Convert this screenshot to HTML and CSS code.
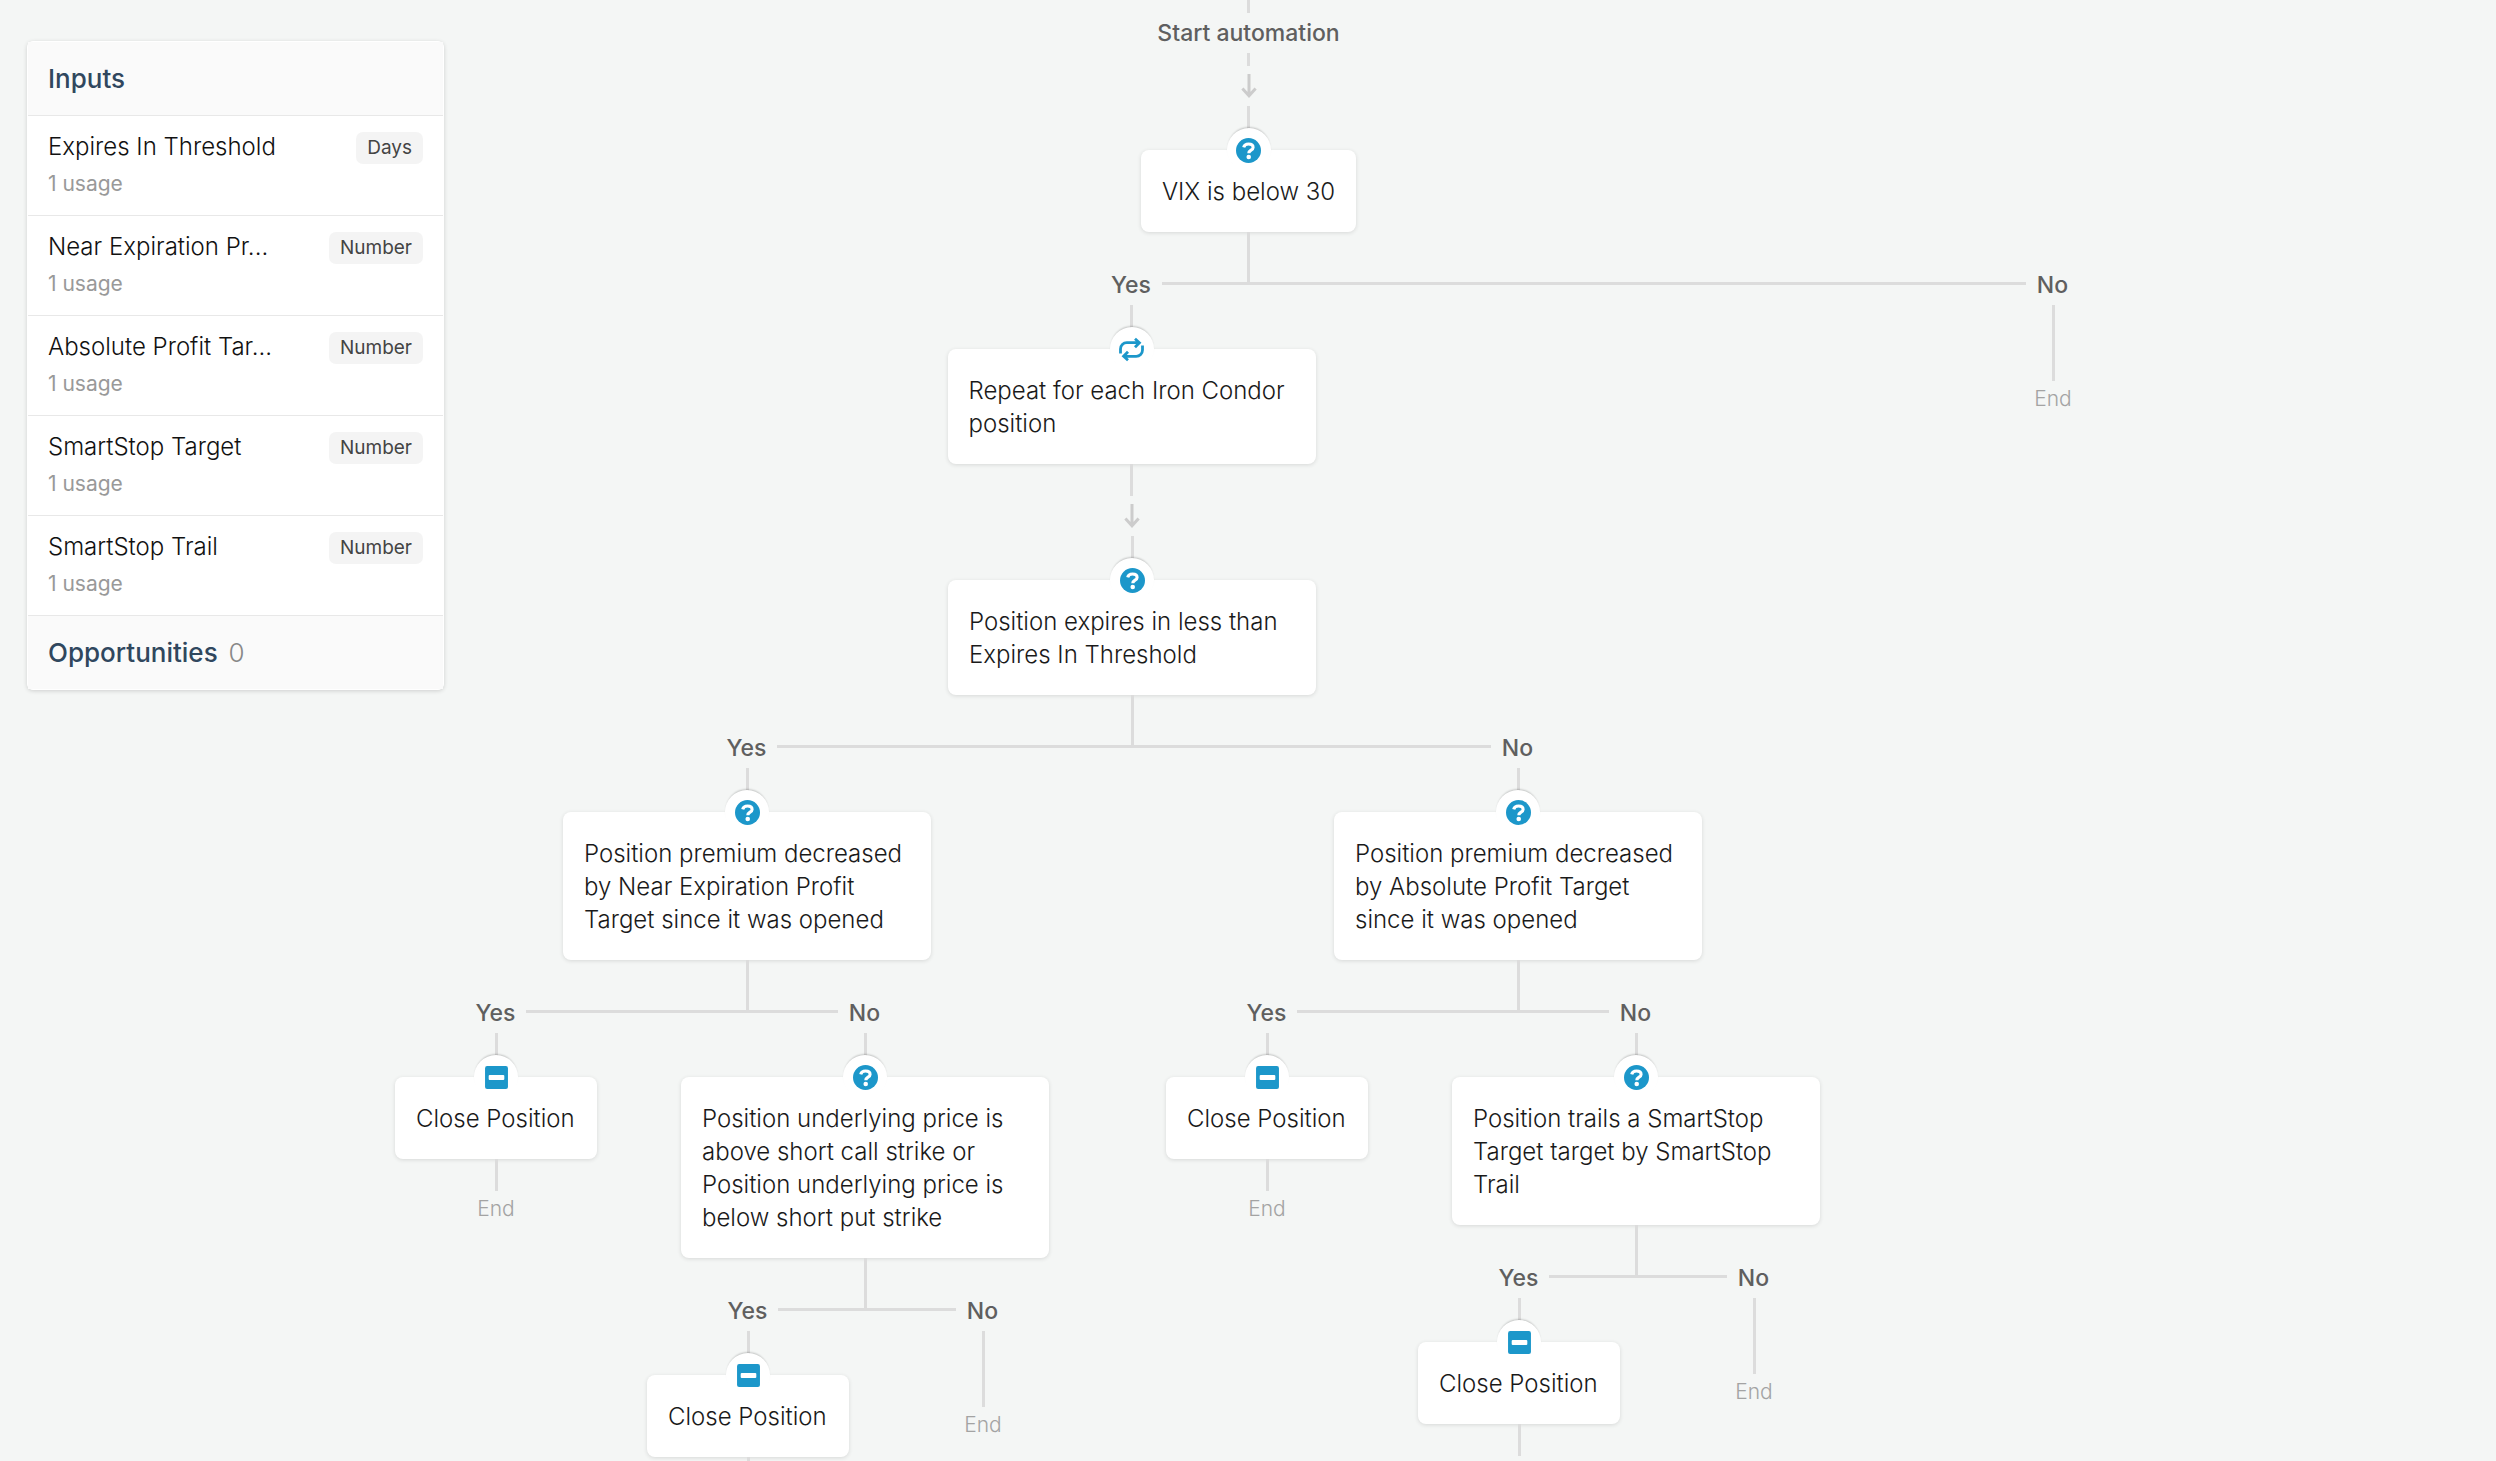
FILE: index.html
```html
<!DOCTYPE html>
<html lang="en">
<head>
    <meta charset="UTF-8">
    <meta name="viewport" content="width=device-width, initial-scale=1.0">
    <title>Automation Editor</title>
    <link rel="stylesheet" href="styles.css">
</head>
<body>
    <!-- Shared icons -->
    <svg class="icon-defs" aria-hidden="true">
        <symbol id="icon-question" viewBox="0 0 24 24">
            <circle cx="12" cy="12" r="12" fill="#1c97ca"/>
            <path d="M7.4 8.9C7.9 6.8 9.7 5.7 12 5.7c2.5 0 4.4 1.2 4.4 3.3 0 2.8-4.1 2.5-4.1 5.6" fill="none" stroke="#fff" stroke-width="3"/>
            <circle cx="12.2" cy="18.2" r="2.2" fill="#fff"/>
        </symbol>
        <symbol id="icon-repeat" viewBox="0 0 25 23">
            <path d="M1.5 15.5V11a6.3 6.3 0 0 1 6.3-6.3H20M16 .8l4.4 3.9L16 9.2M23.5 7.5V12a6.3 6.3 0 0 1-6.3 6.3H5M9 22.2l-4.4-3.9L9 13.8" fill="none" stroke="#1c97ca" stroke-width="2.8"/>
        </symbol>
        <symbol id="icon-minus" viewBox="0 0 24 24">
            <rect x="1" y="1" width="22" height="22" rx="2" fill="#1c97ca"/>
            <rect x="4.5" y="9.5" width="15" height="5" rx="1" fill="#fff"/>
        </symbol>
        <symbol id="icon-arrow" viewBox="0 0 16 24">
            <path d="M8 0v22M1.4 14.6 8 21.8l6.6-7.2" fill="none" stroke="#ccc" stroke-width="3"/>
        </symbol>
    </svg>

    <aside class="panel">
        <h2 class="panel-title">Inputs</h2>
        <ul class="input-list">
            <li class="input-row">
                <div class="input-info">
                    <div class="input-name">Expires In Threshold</div>
                    <div class="input-usage">1 usage</div>
                </div>
                <span class="tag">Days</span>
            </li>
            <li class="input-row">
                <div class="input-info">
                    <div class="input-name">Near Expiration Pr...</div>
                    <div class="input-usage">1 usage</div>
                </div>
                <span class="tag">Number</span>
            </li>
            <li class="input-row">
                <div class="input-info">
                    <div class="input-name">Absolute Profit Tar...</div>
                    <div class="input-usage">1 usage</div>
                </div>
                <span class="tag">Number</span>
            </li>
            <li class="input-row">
                <div class="input-info">
                    <div class="input-name">SmartStop Target</div>
                    <div class="input-usage">1 usage</div>
                </div>
                <span class="tag">Number</span>
            </li>
            <li class="input-row">
                <div class="input-info">
                    <div class="input-name">SmartStop Trail</div>
                    <div class="input-usage">1 usage</div>
                </div>
                <span class="tag">Number</span>
            </li>
        </ul>
        <h2 class="panel-title">Opportunities <span class="count">0</span></h2>
    </aside>

    <main class="canvas">
        <div class="path">
            <div class="stem stem-tiny"></div>
            <div class="start-label">Start automation</div>
            <div class="stem stem-tiny"></div>
            <div class="arrow"><svg><use href="#icon-arrow"/></svg></div>
            <div class="stem stem-in"></div>
            <div class="card">
                <div class="badge"><svg><use href="#icon-question"/></svg></div>
                VIX is below 30
            </div>
            <div class="stem stem-split"></div>

            <div class="branches">
                <div class="branch">
                    <div class="branch-head yes"><span>Yes</span></div>
                    <div class="path">
                        <div class="stem stem-in"></div>
                        <div class="card">
                            <div class="badge"><svg><use href="#icon-repeat"/></svg></div>
                            Repeat for each Iron Condor position
                        </div>
                        <div class="stem stem-out"></div>
                        <div class="arrow"><svg><use href="#icon-arrow"/></svg></div>

                        <!-- Steps run for each position -->
                        <div class="path">
                            <div class="stem stem-in"></div>
                            <div class="card">
                                <div class="badge"><svg><use href="#icon-question"/></svg></div>
                                Position expires in less than Expires In Threshold
                            </div>
                            <div class="stem stem-split"></div>

                            <div class="branches">
                                <div class="branch">
                                    <div class="branch-head yes"><span>Yes</span></div>
                                    <div class="path">
                                        <div class="stem stem-in"></div>
                                        <div class="card">
                                            <div class="badge"><svg><use href="#icon-question"/></svg></div>
                                            Position premium decreased by Near Expiration Profit Target since it was opened
                                        </div>
                                        <div class="stem stem-split"></div>

                                        <div class="branches">
                                            <div class="branch">
                                                <div class="branch-head yes"><span>Yes</span></div>
                                                <div class="path">
                                                    <div class="stem stem-in"></div>
                                                    <div class="card">
                                                        <div class="badge"><svg><use href="#icon-minus"/></svg></div>
                                                        Close Position
                                                    </div>
                                                    <div class="stem stem-out"></div>
                                                    <div class="end">End</div>
                                                </div>
                                            </div>
                                            <div class="branch">
                                                <div class="branch-head no"><span>No</span></div>
                                                <div class="path">
                                                    <div class="stem stem-in"></div>
                                                    <div class="card">
                                                        <div class="badge"><svg><use href="#icon-question"/></svg></div>
                                                        Position underlying price is above short call strike or Position underlying price is below short put strike
                                                    </div>
                                                    <div class="stem stem-split"></div>

                                                    <div class="branches">
                                                        <div class="branch">
                                                            <div class="branch-head yes"><span>Yes</span></div>
                                                            <div class="path">
                                                                <div class="stem stem-in"></div>
                                                                <div class="card">
                                                                    <div class="badge"><svg><use href="#icon-minus"/></svg></div>
                                                                    Close Position
                                                                </div>
                                                                <div class="stem stem-out"></div>
                                                            </div>
                                                        </div>
                                                        <div class="branch">
                                                            <div class="branch-head no"><span>No</span></div>
                                                            <div class="path">
                                                                <div class="stem stem-long"></div>
                                                                <div class="end">End</div>
                                                            </div>
                                                        </div>
                                                    </div>
                                                </div>
                                            </div>
                                        </div>
                                    </div>
                                </div>

                                <div class="branch">
                                    <div class="branch-head no"><span>No</span></div>
                                    <div class="path">
                                        <div class="stem stem-in"></div>
                                        <div class="card">
                                            <div class="badge"><svg><use href="#icon-question"/></svg></div>
                                            Position premium decreased by Absolute Profit Target since it was opened
                                        </div>
                                        <div class="stem stem-split"></div>

                                        <div class="branches">
                                            <div class="branch">
                                                <div class="branch-head yes"><span>Yes</span></div>
                                                <div class="path">
                                                    <div class="stem stem-in"></div>
                                                    <div class="card">
                                                        <div class="badge"><svg><use href="#icon-minus"/></svg></div>
                                                        Close Position
                                                    </div>
                                                    <div class="stem stem-out"></div>
                                                    <div class="end">End</div>
                                                </div>
                                            </div>
                                            <div class="branch">
                                                <div class="branch-head no"><span>No</span></div>
                                                <div class="path">
                                                    <div class="stem stem-in"></div>
                                                    <div class="card">
                                                        <div class="badge"><svg><use href="#icon-question"/></svg></div>
                                                        Position trails a SmartStop Target target by SmartStop Trail
                                                    </div>
                                                    <div class="stem stem-split"></div>

                                                    <div class="branches">
                                                        <div class="branch">
                                                            <div class="branch-head yes"><span>Yes</span></div>
                                                            <div class="path">
                                                                <div class="stem stem-in"></div>
                                                                <div class="card">
                                                                    <div class="badge"><svg><use href="#icon-minus"/></svg></div>
                                                                    Close Position
                                                                </div>
                                                                <div class="stem stem-out"></div>
                                                            </div>
                                                        </div>
                                                        <div class="branch">
                                                            <div class="branch-head no"><span>No</span></div>
                                                            <div class="path">
                                                                <div class="stem stem-long"></div>
                                                                <div class="end">End</div>
                                                            </div>
                                                        </div>
                                                    </div>
                                                </div>
                                            </div>
                                        </div>
                                    </div>
                                </div>
                            </div>
                        </div>
                    </div>
                </div>

                <div class="branch">
                    <div class="branch-head no"><span>No</span></div>
                    <div class="path">
                        <div class="stem stem-long"></div>
                        <div class="end">End</div>
                    </div>
                </div>
            </div>
        </div>
    </main>
</body>
</html>
```
FILE: styles.css
```css
/* Base styles */
* {
    box-sizing: border-box;
}

body {
    margin: 0;
    background-color: #f4f6f5;
    color: #1a1a1a;
    font-family: Inter, Roboto, sans-serif;
    font-size: 24px;
    font-weight: 300;
    line-height: 33px;
}

.icon-defs {
    display: none;
}

/* Inputs panel, floats over the canvas */
.panel {
    position: absolute;
    top: 41px;
    left: 27px;
    z-index: 10;
    width: 417px;
    border: 1px solid #fff;
    border-radius: 6px;
    background-color: white;
    box-shadow: 0 1px 4px rgba(0, 0, 0, 0.16);
}

.panel-title {
    margin: 0;
    padding: 20px;
    background-color: #fafafa;
    color: #30475e;
    font-size: 26px;
    font-weight: 500;
}

.count {
    margin-left: 4px;
    color: #888;
    font-weight: 300;
}

.input-list {
    margin: 0;
    padding: 0;
    list-style: none;
    border-top: 1px solid #e8e8e8;
}

.input-row {
    display: flex;
    justify-content: space-between;
    align-items: flex-start;
    padding: 14px 20px 12px;
    border-bottom: 1px solid #e8e8e8;
}

.input-name {
    color: #111;
    line-height: 34px;
}

.input-usage {
    color: #999;
    font-size: 21px;
    font-weight: 400;
    line-height: 39px;
}

.tag {
    margin-top: 2px;
    padding: 0 11px;
    border-radius: 7px;
    background-color: #f4f4f4;
    color: #444;
    font-size: 19px;
    font-weight: 400;
    line-height: 32px;
}

/* Decision tree */
.canvas {
    display: flex;
    justify-content: center;
    align-items: flex-start;
    height: 100vh;
    overflow: hidden;
}

.path {
    display: flex;
    flex-direction: column;
    align-items: center;
    padding: 0 16px 0 17px;
}

.branches {
    display: flex;
}

.branch-head {
    display: flex;
    align-items: center;
    height: 43px;
    color: #5f5f5f;
    font-size: 23px;
    font-weight: 500;
}

.branch-head::before,
.branch-head::after {
    content: "";
    flex: 1;
    height: 3px;
}

.branch-head.yes::after,
.branch-head.no::before {
    background-color: #dcdcdc;
}

.branch-head span {
    padding: 4px 11px 0;
}

.start-label {
    color: #5f5f5f;
    font-size: 23px;
    font-weight: 500;
    line-height: 40px;
}

.stem {
    width: 3px;
    background-color: #dcdcdc;
}

.stem-tiny {
    height: 13px;
}

.stem-in {
    height: 44px;
}

.stem-out {
    height: 32px;
}

.stem-long {
    height: 76px;
}

/* runs down to the line between Yes and No */
.stem-split {
    height: 50px;
    margin-bottom: -20px;
}

.arrow {
    display: flex;
    justify-content: center;
    align-items: center;
    height: 40px;
}

.arrow svg {
    width: 16px;
    height: 24px;
}

.card {
    min-width: 202px;
    max-width: 368px;
    padding: 0 21px 24px;
    border-radius: 8px;
    background-color: white;
    box-shadow: 0 1px 4px rgba(0, 0, 0, 0.12);
}

.badge {
    display: flex;
    justify-content: center;
    align-items: center;
    width: 44px;
    height: 44px;
    margin: -22px auto 3px;
    border-radius: 50%;
    background-color: white;
    box-shadow: 0 -2px 2px -1px rgba(0, 0, 0, 0.2);
}

.badge svg {
    width: 25px;
    height: 25px;
}

.end {
    min-width: 202px;
    color: #a3a3a3;
    font-size: 21px;
    line-height: 35px;
    text-align: center;
}
```
